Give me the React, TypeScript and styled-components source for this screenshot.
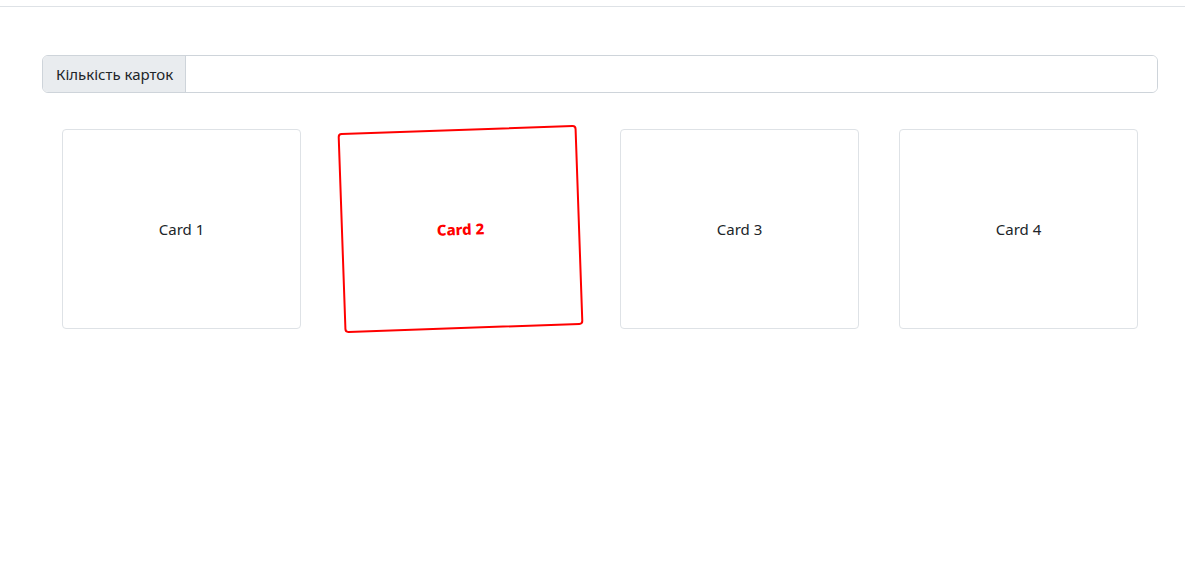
import * as React from 'react'
import styled, { createGlobalStyle } from 'styled-components'

const GlobalStyle = createGlobalStyle`
  html, body {
    margin: 0;
    background: #fff;
  }
  body {
    font-family: "Noto Sans", "Open Sans", sans-serif;
    font-size: 16px;
    color: #212529;
  }
`

const cards = ['Card 1', 'Card 2', 'Card 3', 'Card 4']
const activeCard = 1

export default function App() {
  return (
    <>
      <GlobalStyle />
      <TopBar />
      <Main>
        <InputGroup>
          <GroupLabel htmlFor='cardCount'>Кількість карток</GroupLabel>
          <CountInput id='cardCount' type='number' />
        </InputGroup>
        <CardRow>
          {cards.map((title, i) => (
            <Card key={title} $active={i === activeCard}>
              {title}
            </Card>
          ))}
        </CardRow>
      </Main>
    </>
  )
}

const TopBar = styled.div`
  height: 6px;
  border-bottom: 1px solid #dee2e6;
`

const Main = styled.main`
  box-sizing: border-box;
  min-height: 420px;
  padding: 48px 27px 0 42px;
`

const InputGroup = styled.div`
  display: flex;
  height: 38px;
  box-sizing: border-box;
  border: 1px solid #ced4da;
  border-radius: 6px;
  overflow: hidden;
`

const GroupLabel = styled.label`
  display: flex;
  align-items: center;
  padding: 0 12px 0 13px;
  background: #e9ecef;
  border-right: 1px solid #ced4da;
  font-size: 15px;
  white-space: nowrap;
`

const CountInput = styled.input`
  flex: 1;
  border: none;
  outline: none;
  padding: 0 12px;
  font: inherit;
  background: #fff;
  -moz-appearance: textfield;
  &::-webkit-inner-spin-button,
  &::-webkit-outer-spin-button {
    -webkit-appearance: none;
  }
`

const CardRow = styled.div`
  display: grid;
  grid-template-columns: repeat(4, 239px);
  column-gap: 40px;
  padding: 0 20px;
  margin-top: 36px;
`

const Card = styled.div<{ $active: boolean }>`
  position: relative;
  z-index: ${p => (p.$active ? 1 : 0)};
  height: 200px;
  box-sizing: border-box;
  display: flex;
  align-items: center;
  justify-content: center;
  background: #fff;
  border: ${p => (p.$active ? '2px solid #ff0000' : '1px solid #dee2e6')};
  border-radius: 4px;
  color: ${p => (p.$active ? '#ff0000' : '#212529')};
  font-weight: ${p => (p.$active ? 800 : 400)};
  font-size: 15px;
  transform: ${p => (p.$active ? 'rotate(-2deg)' : 'none')};
`
